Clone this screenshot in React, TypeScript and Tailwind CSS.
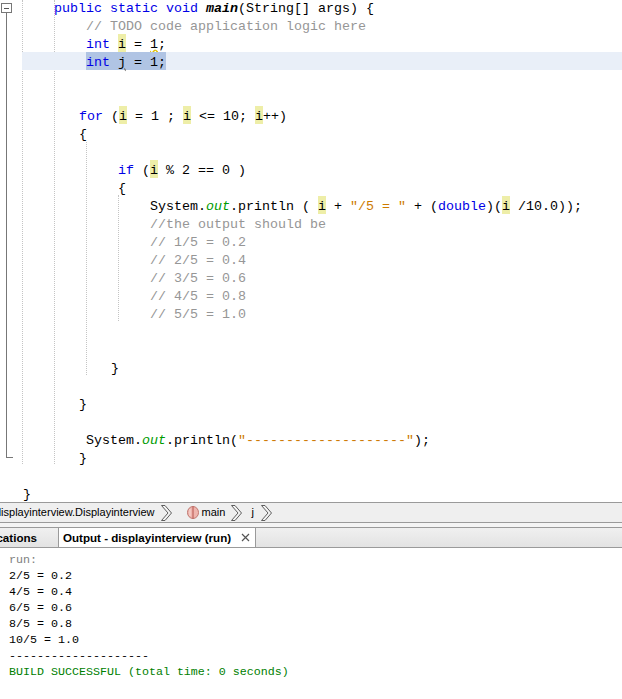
import React from 'react';

const mono = "font-['Liberation_Mono',monospace] text-[13.33px] leading-[18px]";

function Kw({ children }: { children: React.ReactNode }) {
  return <span className="text-[#0000e6]">{children}</span>;
}

function Mark({ children }: { children: React.ReactNode }) {
  return <span className="-mt-[2px] inline-block h-[18px] bg-[#eeeea8] pt-[2px]">{children}</span>;
}

function Out() {
  return <span className="italic text-[#009b00]">out</span>;
}

function Str({ children }: { children: React.ReactNode }) {
  return <span className="text-[#ce7b00]">{children}</span>;
}

function Note({ children }: { children: React.ReactNode }) {
  return <span className="text-[#969696]">{children}</span>;
}

function Line({ pad, children }: { pad: string; children?: React.ReactNode }) {
  return <div className={`h-[18px] whitespace-pre pt-[2px] ${pad}`}>{children}</div>;
}

function Chevron() {
  return (
    <svg width="11" height="16" viewBox="0 0 11 16" fill="none" className="shrink-0">
      <path d="M0.5 0.5 L7 8 L0.5 15.5 L4 15.5 L10.5 8 L4 0.5 Z" fill="#f4f4f4" stroke="#5c5c5c" strokeWidth="1" />
    </svg>
  );
}

function MethodIcon() {
  return (
    <svg width="12" height="13" viewBox="0 0 12 13" className="shrink-0">
      <ellipse cx="6" cy="6.5" rx="5.5" ry="6" fill="#eeb5ae" stroke="#c07870" />
      <path d="M6 0.5 V12.5" stroke="#b5524c" strokeWidth="1" />
      <path d="M3 3 V10" stroke="#f8dcd8" strokeWidth="1" />
    </svg>
  );
}

export default function App() {
  return (
    <div className="h-[699px] w-[622px] overflow-hidden bg-white flex flex-col text-black">
      <div className="relative h-[502px] shrink-0 overflow-hidden">
        {/* fold marker and indent guides */}
        <div className="absolute left-[1px] top-[3px] z-10 flex h-[10px] w-[11px] items-center justify-center border border-[#777777] bg-white">
          <div className="h-px w-[5px] bg-[#555555]" />
        </div>
        <div className="absolute left-[6px] top-[13px] h-[445px] w-[7px] border-b border-l border-[#777777]" />
        <div className="absolute left-[22px] top-0 h-[464px] border-l border-dotted border-[#c4c4c4]" />
        <div className="absolute left-[54px] top-0 h-[464px] border-l border-dotted border-[#c4c4c4]" />
        <div className="absolute left-[86px] top-[142px] h-[233px] border-l border-dotted border-[#c4c4c4]" />
        <div className="absolute left-[118px] top-[195px] h-[126px] border-l border-dotted border-[#c4c4c4]" />

        <div className={`relative -mt-[2px] ${mono}`}>
          <Line pad="pl-[54px]">
            <Kw>public static void</Kw> <b className="italic">main</b>(String[] args) {'{'}
          </Line>
          <Line pad="pl-[86px]"><Note>// TODO code application logic here</Note></Line>
          <Line pad="pl-[86px]">
            <Kw>int</Kw> <Mark>i</Mark> = <span className="underline decoration-wavy decoration-[#e0c000]">1</span>;
          </Line>
          <div className="ml-[22px] h-[18px] whitespace-pre bg-[#e9eff8] pl-[64px]">
            <span className="inline-block h-[18px] bg-[#b0c4e4] pt-[2px]">
              <Kw>int</Kw> <span className="underline decoration-wavy decoration-[#808080]">j</span> = 1;
            </span>
          </div>
          <Line pad="" />
          <Line pad="" />
          <Line pad="pl-[79px]">
            <Kw>for</Kw> (<Mark>i</Mark> = 1 ; <Mark>i</Mark> {'<='} 10; <Mark>i</Mark>++)
          </Line>
          <Line pad="pl-[79px]">{'{'}</Line>
          <Line pad="" />
          <Line pad="pl-[118px]">
            <Kw>if</Kw> (<Mark>i</Mark> % 2 == 0 )
          </Line>
          <Line pad="pl-[118px]">{'{'}</Line>
          <Line pad="pl-[150px]">
            System.<Out />.println ( <Mark>i</Mark> + <Str>"/5 = "</Str> + (<Kw>double</Kw>)(<Mark>i</Mark> /10.0));
          </Line>
          <Line pad="pl-[150px]"><Note>//the output should be</Note></Line>
          <Line pad="pl-[150px]"><Note>// 1/5 = 0.2</Note></Line>
          <Line pad="pl-[150px]"><Note>// 2/5 = 0.4</Note></Line>
          <Line pad="pl-[150px]"><Note>// 3/5 = 0.6</Note></Line>
          <Line pad="pl-[150px]"><Note>// 4/5 = 0.8</Note></Line>
          <Line pad="pl-[150px]"><Note>// 5/5 = 1.0</Note></Line>
          <Line pad="" />
          <Line pad="" />
          <Line pad="pl-[111px]">{'}'}</Line>
          <Line pad="" />
          <Line pad="pl-[79px]">{'}'}</Line>
          <Line pad="" />
          <Line pad="pl-[86px]">
            System.<Out />.println(<Str>"--------------------"</Str>);
          </Line>
          <Line pad="pl-[79px]">{'}'}</Line>
          <Line pad="" />
          <Line pad="pl-[23px]">{'}'}</Line>
        </div>
      </div>

      {/* breadcrumb bar */}
      <div className="flex h-[21px] shrink-0 items-center overflow-hidden whitespace-nowrap border-y border-[#9a9a9a] bg-[#efefef] font-['Liberation_Sans',sans-serif] text-[11px]">
        <span className="-ml-[5px]">displayinterview.Displayinterview</span>
        <span className="ml-[6px] flex"><Chevron /></span>
        <span className="ml-[15px] flex"><MethodIcon /></span>
        <span className="ml-[3px]">main</span>
        <span className="ml-[6px] flex"><Chevron /></span>
        <span className="ml-[9px]">j</span>
        <span className="ml-[7px] flex"><Chevron /></span>
      </div>
      <div className="h-[4px] shrink-0 bg-[#f4f4f4]" />

      {/* output tabs */}
      <div className="flex h-[21px] shrink-0 items-stretch overflow-hidden whitespace-nowrap border-y border-[#9a9a9a] bg-gradient-to-b from-[#f0f0f0] to-[#e3e3e3] font-['Liberation_Sans',sans-serif] text-[11.6px] font-bold">
        <div className="flex w-[58px] items-center justify-end pr-[21px]">cations</div>
        <div className="flex w-[198px] items-center border-x border-[#9a9a9a] bg-white pl-[4px]">
          <span>Output - displayinterview (run)</span>
          <svg width="9" height="9" viewBox="0 0 9 9" className="ml-[10px] shrink-0">
            <path d="M1 1 L8 8 M8 1 L1 8" stroke="#555555" strokeWidth="1.2" />
          </svg>
        </div>
      </div>

      <div className="flex-1 pl-[9px] pt-[4px] font-['Liberation_Mono',monospace] text-[11.67px] leading-[16px] whitespace-pre">
        <div className="text-[#808080]">run:</div>
        <div>2/5 = 0.2</div>
        <div>4/5 = 0.4</div>
        <div>6/5 = 0.6</div>
        <div>8/5 = 0.8</div>
        <div>10/5 = 1.0</div>
        <div>--------------------</div>
        <div className="text-[#008000]">BUILD SUCCESSFUL (total time: 0 seconds)</div>
      </div>
    </div>
  );
}
